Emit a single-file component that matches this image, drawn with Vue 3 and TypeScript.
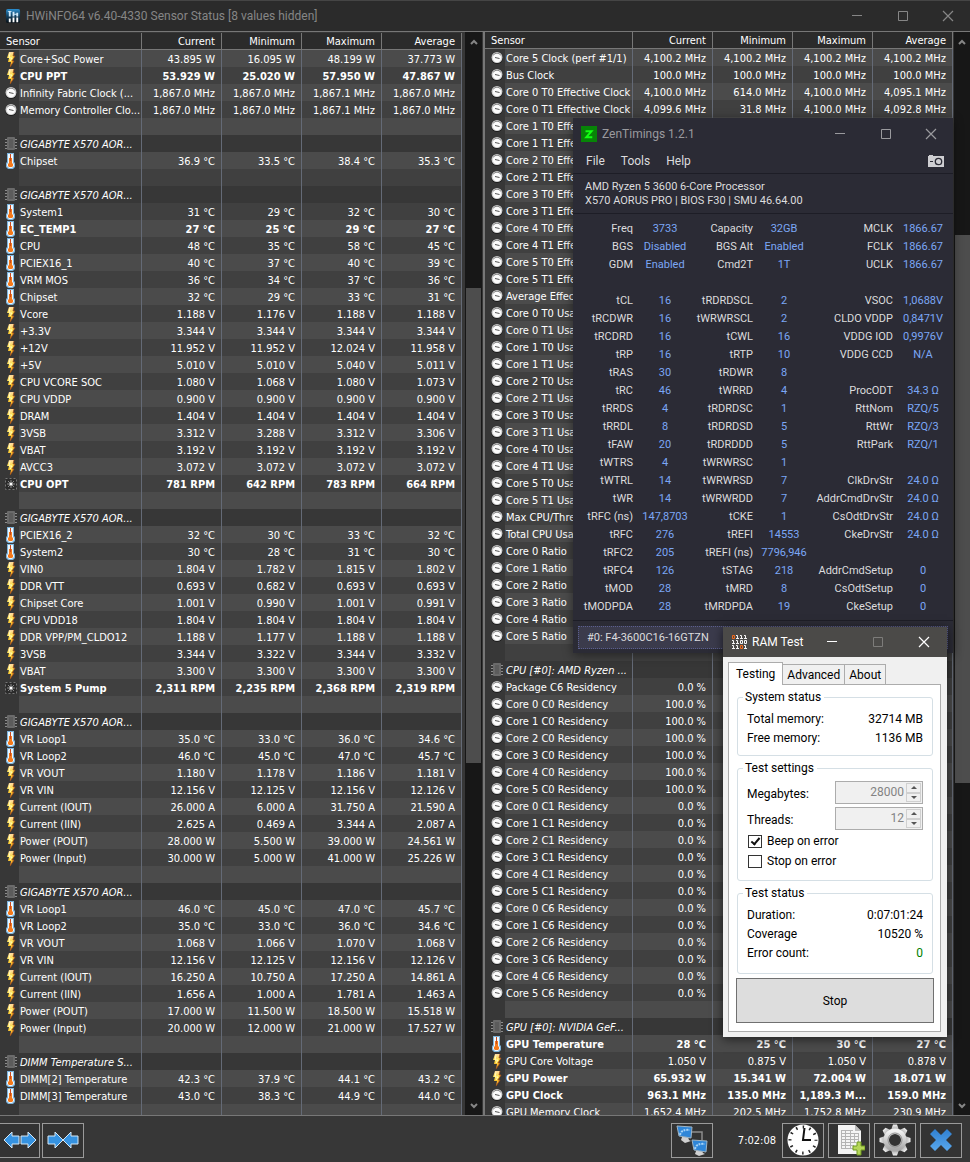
<script setup lang="ts">
type Icon = 'bolt' | 'gauge' | 'temp' | 'fan' | 'chip' | ''
interface Row {
  icon: Icon
  name: string
  values: string[]
  bold?: boolean
}

function row(icon: Icon, name: string, values = '', bold = false): Row {
  return { icon, name, values: values ? values.split('|') : ['', '', '', ''], bold }
}
const blank = () => row('', '')
const group = (name: string) => row('chip', name)
const bolt = (name: string, unit: string, v: string) =>
  row('bolt', name, v.split(' ').map((x) => `${x} ${unit}`).join('|'))
const temp = (name: string, v: string, bold = false) =>
  row('temp', name, v.split(' ').map((x) => `${x} °C`).join('|'), bold)
const rpm = (name: string, v: string) =>
  row('fan', name, v.split(' ').map((x) => `${x} RPM`).join('|'), true)
const mhz = (name: string, v: string, bold = false) =>
  row('gauge', name, v.split(' ').map((x) => `${x} MHz`).join('|'), bold)

const board = 'GIGABYTE X570 AOR...'

const leftRows: Row[] = [
  bolt('Core+SoC Power', 'W', '43.895 16.095 48.199 37.773'),
  { ...bolt('CPU PPT', 'W', '53.929 25.020 57.950 47.867'), bold: true },
  mhz('Infinity Fabric Clock (...', '1,867.0 1,867.0 1,867.1 1,867.0'),
  mhz('Memory Controller Clo...', '1,867.0 1,867.0 1,867.1 1,867.0'),
  blank(),
  group(board),
  temp('Chipset', '36.9 33.5 38.4 35.3'),
  blank(),
  group(board),
  temp('System1', '31 29 32 30'),
  temp('EC_TEMP1', '27 25 29 27', true),
  temp('CPU', '48 35 58 45'),
  temp('PCIEX16_1', '40 37 40 39'),
  temp('VRM MOS', '36 34 37 36'),
  temp('Chipset', '32 29 33 31'),
  bolt('Vcore', 'V', '1.188 1.176 1.188 1.188'),
  bolt('+3.3V', 'V', '3.344 3.344 3.344 3.344'),
  bolt('+12V', 'V', '11.952 11.952 12.024 11.958'),
  bolt('+5V', 'V', '5.010 5.010 5.040 5.011'),
  bolt('CPU VCORE SOC', 'V', '1.080 1.068 1.080 1.073'),
  bolt('CPU VDDP', 'V', '0.900 0.900 0.900 0.900'),
  bolt('DRAM', 'V', '1.404 1.404 1.404 1.404'),
  bolt('3VSB', 'V', '3.312 3.288 3.312 3.306'),
  bolt('VBAT', 'V', '3.192 3.192 3.192 3.192'),
  bolt('AVCC3', 'V', '3.072 3.072 3.072 3.072'),
  rpm('CPU OPT', '781 642 783 664'),
  blank(),
  group(board),
  temp('PCIEX16_2', '32 30 33 32'),
  temp('System2', '30 28 31 30'),
  bolt('VIN0', 'V', '1.804 1.782 1.815 1.802'),
  bolt('DDR VTT', 'V', '0.693 0.682 0.693 0.693'),
  bolt('Chipset Core', 'V', '1.001 0.990 1.001 0.991'),
  bolt('CPU VDD18', 'V', '1.804 1.804 1.804 1.804'),
  bolt('DDR VPP/PM_CLDO12', 'V', '1.188 1.177 1.188 1.188'),
  bolt('3VSB', 'V', '3.344 3.322 3.344 3.332'),
  bolt('VBAT', 'V', '3.300 3.300 3.300 3.300'),
  rpm('System 5 Pump', '2,311 2,235 2,368 2,319'),
  blank(),
  group(board),
  temp('VR Loop1', '35.0 33.0 36.0 34.6'),
  temp('VR Loop2', '46.0 45.0 47.0 45.7'),
  bolt('VR VOUT', 'V', '1.180 1.178 1.186 1.181'),
  bolt('VR VIN', 'V', '12.156 12.125 12.156 12.126'),
  bolt('Current (IOUT)', 'A', '26.000 6.000 31.750 21.590'),
  bolt('Current (IIN)', 'A', '2.625 0.469 3.344 2.087'),
  bolt('Power (POUT)', 'W', '28.000 5.500 39.000 24.561'),
  bolt('Power (Input)', 'W', '30.000 5.000 41.000 25.226'),
  blank(),
  group(board),
  temp('VR Loop1', '46.0 45.0 47.0 45.7'),
  temp('VR Loop2', '35.0 33.0 36.0 34.6'),
  bolt('VR VOUT', 'V', '1.068 1.066 1.070 1.068'),
  bolt('VR VIN', 'V', '12.156 12.125 12.156 12.126'),
  bolt('Current (IOUT)', 'A', '16.250 10.750 17.250 14.861'),
  bolt('Current (IIN)', 'A', '1.656 1.000 1.781 1.463'),
  bolt('Power (POUT)', 'W', '17.000 11.500 18.500 15.518'),
  bolt('Power (Input)', 'W', '20.000 12.000 21.000 17.527'),
  blank(),
  group('DIMM Temperature S...'),
  temp('DIMM[2] Temperature', '42.3 37.9 44.1 43.2'),
  temp('DIMM[3] Temperature', '43.0 38.3 44.9 44.0'),
  blank(),
]

const cores = [0, 1, 2, 3, 4, 5]
const perThread = (from: number, label: string) =>
  cores.slice(from).flatMap((c) => [0, 1].map((t) => row('gauge', `Core ${c} T${t} ${label}`)))
const residency = (state: string, value: string) =>
  cores.map((c) => row('gauge', `Core ${c} ${state} Residency`, `${value}|||`))

const rightRows: Row[] = [
  mhz('Core 5 Clock (perf #1/1)', '4,100.2 4,100.2 4,100.2 4,100.2'),
  mhz('Bus Clock', '100.0 100.0 100.0 100.0'),
  mhz('Core 0 T0 Effective Clock', '4,100.0 614.0 4,100.0 4,095.1'),
  mhz('Core 0 T1 Effective Clock', '4,099.6 31.8 4,100.0 4,092.8'),
  ...perThread(1, 'Effective Clock'),
  row('gauge', 'Average Effective Clock'),
  ...perThread(0, 'Usage'),
  row('gauge', 'Max CPU/Thread Usage'),
  row('gauge', 'Total CPU Usage'),
  ...cores.map((c) => row('gauge', `Core ${c} Ratio`)),
  blank(),
  group('CPU [#0]: AMD Ryzen ...'),
  row('gauge', 'Package C6 Residency', '0.0 %|||'),
  ...residency('C0', '100.0 %'),
  ...residency('C1', '0.0 %'),
  ...residency('C6', '0.0 %'),
  blank(),
  group('GPU [#0]: NVIDIA GeF...'),
  temp('GPU Temperature', '28 25 30 27', true),
  bolt('GPU Core Voltage', 'V', '1.050 0.875 1.050 0.878'),
  { ...bolt('GPU Power', 'W', '65.932 15.341 72.004 18.071'), bold: true },
  row('gauge', 'GPU Clock', '963.1 MHz|135.0 MHz|1,189.3 M...|159.0 MHz', true),
  mhz('GPU Memory Clock', '1,652.4 202.5 1,752.8 230.9'),
]

const panes = [
  { id: 'left', rows: leftRows, before: 238, thumb: 474, after: 339 },
  { id: 'right', rows: rightRows, before: 185, thumb: 547, after: 319 },
]
const columns = ['Current', 'Minimum', 'Maximum', 'Average']

const timings: string[][] = [
  ['Freq', '3733', 'Capacity', '32GB', 'MCLK', '1866.67'],
  ['BGS', 'Disabled', 'BGS Alt', 'Enabled', 'FCLK', '1866.67'],
  ['GDM', 'Enabled', 'Cmd2T', '1T', 'UCLK', '1866.67'],
  ['', '', '', '', '', ''],
  ['tCL', '16', 'tRDRDSCL', '2', 'VSOC', '1,0688V'],
  ['tRCDWR', '16', 'tWRWRSCL', '2', 'CLDO VDDP', '0,8471V'],
  ['tRCDRD', '16', 'tCWL', '16', 'VDDG IOD', '0,9976V'],
  ['tRP', '16', 'tRTP', '10', 'VDDG CCD', 'N/A'],
  ['tRAS', '30', 'tRDWR', '8', '', ''],
  ['tRC', '46', 'tWRRD', '4', 'ProcODT', '34.3 Ω'],
  ['tRRDS', '4', 'tRDRDSC', '1', 'RttNom', 'RZQ/5'],
  ['tRRDL', '8', 'tRDRDSD', '5', 'RttWr', 'RZQ/3'],
  ['tFAW', '20', 'tRDRDDD', '5', 'RttPark', 'RZQ/1'],
  ['tWTRS', '4', 'tWRWRSC', '1', '', ''],
  ['tWTRL', '14', 'tWRWRSD', '7', 'ClkDrvStr', '24.0 Ω'],
  ['tWR', '14', 'tWRWRDD', '7', 'AddrCmdDrvStr', '24.0 Ω'],
  ['tRFC (ns)', '147,8703', 'tCKE', '1', 'CsOdtDrvStr', '24.0 Ω'],
  ['tRFC', '276', 'tREFI', '14553', 'CkeDrvStr', '24.0 Ω'],
  ['tRFC2', '205', 'tREFI (ns)', '7796,946', '', ''],
  ['tRFC4', '126', 'tSTAG', '218', 'AddrCmdSetup', '0'],
  ['tMOD', '28', 'tMRD', '8', 'CsOdtSetup', '0'],
  ['tMODPDA', '28', 'tMRDPDA', '19', 'CkeSetup', '0'],
]
</script>

<template>
  <div class="app">
    <svg class="defs" aria-hidden="true">
      <defs>
        <linearGradient id="g-bolt" x1="0" y1="0" x2="0" y2="1">
          <stop offset="0" stop-color="#ffd9a0" />
          <stop offset=".45" stop-color="#ffe23c" />
          <stop offset="1" stop-color="#f58a1c" />
        </linearGradient>
        <linearGradient id="g-blue" x1="0" y1="0" x2="0" y2="1">
          <stop offset="0" stop-color="#2f7fd0" />
          <stop offset="1" stop-color="#5aa8ec" />
        </linearGradient>
        <linearGradient id="g-gear" x1="0" y1="0" x2="0" y2="1">
          <stop offset="0" stop-color="#f2f2f2" />
          <stop offset="1" stop-color="#a9a9a9" />
        </linearGradient>
        <linearGradient id="g-title" x1="0" y1="0" x2="0" y2="1">
          <stop offset="0" stop-color="#2b8fd0" />
          <stop offset=".5" stop-color="#12405f" />
          <stop offset="1" stop-color="#0a0f14" />
        </linearGradient>
      </defs>
      <symbol id="i-bolt" viewBox="0 0 14 16">
        <path d="M5 1h5L9 5h2L8 10h2l-4 6 1-5H4l1-4H3z" fill="url(#g-bolt)" />
        <path d="M10 1L9 5h2L8 10h2l-4 6" fill="none" stroke="#a8501a" stroke-width=".8" />
        <path d="M6 2L5 7h3l-2 3" fill="none" stroke="#fffbc0" />
      </symbol>
      <symbol id="i-gauge" viewBox="0 0 14 16">
        <circle cx="7" cy="8" r="6" fill="#1c1c1c" />
        <circle cx="7" cy="7.500" r="5.500" fill="#d2d2d2" />
        <circle cx="7" cy="8" r="4.200" fill="#fbfbfb" />
        <path d="M3 5.500a4.600 4.600 0 0 1 8 0" fill="none" stroke="#8a8a8a" />
        <path d="M5 7.500l4.500 1" stroke="#555" />
      </symbol>
      <symbol id="i-temp" viewBox="0 0 14 16">
        <path d="M3 0h7v9l1 1v4l-2 2H4l-2-2v-4l1-1z" fill="#7db4dc" />
        <path d="M4 1h5v9l1 1v2l-2 2H5l-2-2v-2l1-1z" fill="#edf6fd" />
        <path d="M5 5h3v5l1 1v2l-1 1H5l-1-1v-2l1-1z" fill="#f47a1c" />
        <path d="M6.500 1v7" stroke="#c8481a" />
      </symbol>
      <symbol id="i-chip" viewBox="0 0 14 16">
        <path d="M1 3.500h12M1 6.500h12M1 9.500h12M1 12.500h12" stroke="#8c8c8c" />
        <rect x="3" y="1" width="8" height="13" rx="1" fill="#6a6a6a" />
        <path d="M5 3h4v9H5z" fill="#5c5c5c" />
      </symbol>
      <symbol id="i-fan" viewBox="0 0 14 16">
        <rect x="1.500" y="2.500" width="11" height="11" fill="#2b2b2b" stroke="#777" stroke-dasharray="2 2" />
        <path d="M7 4v8M3 8h8M4 5l6 6M10 5l-6 6" stroke="#898989" />
        <circle cx="7" cy="8" r="1.500" fill="#fff" />
      </symbol>
      <symbol id="i-min" viewBox="0 0 12 12"><path d="M1 5.500h10" stroke="currentColor" /></symbol>
      <symbol id="i-max" viewBox="0 0 12 12">
        <path d="M1.500 1.500h9v9h-9z" fill="none" stroke="currentColor" />
      </symbol>
      <symbol id="i-close" viewBox="0 0 12 12">
        <path d="M1 1l10 10M11 1L1 11" stroke="currentColor" stroke-width="1.200" />
      </symbol>
    </svg>

    <header class="titlebar">
      <svg class="app-icon" viewBox="0 0 16 16">
        <rect x="0" y="0" width="15" height="15" rx="2" fill="url(#g-title)" />
        <path d="M2 2h4v1H2zM3 3h2v5H3zM7 3h2v5H7zM11 4h2v4h-2zM9 5h2v1H9z" fill="#cfe9fa" />
        <path d="M3 10h2v4H3zM7 9h2v5H7zM11 9h2v5h-2z" fill="#fff" />
      </svg>
      <h1>HWiNFO64 v6.40-4330 Sensor Status [8 values hidden]</h1>
      <button class="win" aria-label="Minimize"><svg><use href="#i-min" /></svg></button>
      <button class="win" aria-label="Maximize"><svg><use href="#i-max" /></svg></button>
      <button class="win" aria-label="Close"><svg><use href="#i-close" /></svg></button>
    </header>

    <main class="panes">
      <section v-for="p in panes" :key="p.id" class="pane" :class="p.id">
        <div class="table-wrap">
          <table class="sensors">
            <colgroup>
              <col class="c-icon" />
              <col />
              <col v-for="c in columns" :key="c" class="c-value" />
            </colgroup>
            <thead>
              <tr>
                <th colspan="2" class="name">Sensor</th>
                <th v-for="c in columns" :key="c">{{ c }}</th>
              </tr>
            </thead>
            <tbody>
              <tr
                v-for="(r, i) in p.rows"
                :key="i"
                :class="{ odd: i % 2 === 1, bold: r.bold, group: r.icon === 'chip' }"
              >
                <td class="icon">
                  <svg v-if="r.icon"><use :href="`#i-${r.icon}`" /></svg>
                </td>
                <td class="name">{{ r.name }}</td>
                <td v-for="(v, k) in r.values" :key="k">{{ v }}</td>
              </tr>
            </tbody>
          </table>
        </div>
        <div class="scroll" aria-hidden="true">
          <svg viewBox="0 0 8 6"><path d="M1 5l3-3 3 3" /></svg>
          <div :style="{ flexGrow: p.before }"></div>
          <div class="thumb" :style="{ flexGrow: p.thumb }"></div>
          <div :style="{ flexGrow: p.after }"></div>
          <svg viewBox="0 0 8 6"><path d="M1 1l3 3 3-3" /></svg>
        </div>
      </section>
    </main>

    <footer class="toolbar">
      <button class="tool first" aria-label="Expand columns">
        <svg class="arrows" viewBox="0 0 34 20">
          <path d="M1 10l8-8v4h7v8H9v4zM33 10l-8-8v4h-7v8h7v4z" />
        </svg>
      </button>
      <button class="tool" aria-label="Shrink columns">
        <svg class="arrows" viewBox="0 0 34 20">
          <path d="M17 10L9 2v4H2v8h7v4zM17 10l8-8v4h7v8h-7v4z" />
        </svg>
      </button>
      <span class="grow"></span>
      <button class="tool network" aria-label="Remote sensors">
        <svg viewBox="0 0 32 32">
          <path d="M16 8h10v8" fill="none" stroke="#8c8c8c" stroke-width="1.500" />
          <path d="M6 13h6l1 3 2 1-6 2-4-3z" fill="#d0d0d0" />
          <path d="M1 2l15 1-1 11-12-2z" fill="#2f86d8" stroke="#9fb4c4" />
          <path d="M4 11q1-6 10-5" fill="none" stroke="#a5d3f7" stroke-width="2" stroke-dasharray="2 1" />
          <path d="M20 27h6l1 2 2 1-6 2-4-2z" fill="#d0d0d0" />
          <path d="M16 16l15 1-1 11-12-2z" fill="#2f86d8" stroke="#9fb4c4" />
          <path d="M19 25q1-6 10-5" fill="none" stroke="#a5d3f7" stroke-width="2" stroke-dasharray="2 1" />
        </svg>
      </button>
      <time class="elapsed">7:02:08</time>
      <button class="tool" aria-label="Reset clock">
        <svg viewBox="0 0 32 32">
          <circle cx="16" cy="16" r="15.500" fill="#fff" />
          <circle cx="16" cy="16" r="13" fill="none" stroke="#222" stroke-width="3" stroke-dasharray="1.500 5.307" stroke-dashoffset=".75" />
          <path d="M17.500 4L16 16h8" fill="none" stroke="#111" stroke-width="2" />
        </svg>
      </button>
      <button class="tool" aria-label="Start logging">
        <svg viewBox="0 0 32 32">
          <path d="M5 1h17l6 6v23H5z" fill="#f4f4f4" />
          <path d="M22 1v6h6z" fill="#bdbdbd" />
          <path d="M8 6.500h12M8 9.500h17M8 12.500h17M8 15.500h17M8 18.500h15M8 21.500h13M8 24.500h13M8.500 6v19M12.500 6v19M17.500 6v19M21.500 9v10M25.500 9v9" fill="none" stroke="#b4b4b4" />
          <path d="M24 18h4v4h4v4h-4v5h-4v-5h-4v-4h4z" fill="#b5d65a" stroke="#6f9a1e" />
        </svg>
      </button>
      <button class="tool" aria-label="Settings">
        <svg viewBox="0 0 32 32">
          <g fill="url(#g-gear)">
            <path v-for="a in 8" :key="a" d="M12 6l2-5.500h4L20 6z" :transform="`rotate(${a * 45} 16 16)`" />
          </g>
          <circle cx="16" cy="16" r="8.800" fill="none" stroke="url(#g-gear)" stroke-width="5.500" />
          <circle cx="16" cy="16" r="7" fill="none" stroke="#8f8f8f" />
        </svg>
      </button>
      <button class="tool" aria-label="Close sensors">
        <svg viewBox="0 0 32 32">
          <path d="M5 10l5-5 6 6 6-6 5 5-6 6 6 6-5 5-6-6-6 6-5-5 6-6z" fill="url(#g-blue)" />
        </svg>
      </button>
    </footer>

    <section class="zen" aria-label="ZenTimings">
      <div class="zen-title">
        <svg class="zen-icon" viewBox="0 0 16 16">
          <rect width="16" height="16" fill="#078407" />
          <path d="M4.500 5.200h6l-5.200 6h6" fill="none" stroke="#13ff13" stroke-width="2" />
        </svg>
        <h2>ZenTimings 1.2.1</h2>
        <button class="win" aria-label="Minimize"><svg><use href="#i-min" /></svg></button>
        <button class="win" aria-label="Maximize"><svg><use href="#i-max" /></svg></button>
        <button class="win" aria-label="Close"><svg><use href="#i-close" /></svg></button>
      </div>
      <nav class="zen-menu">
        <button>File</button>
        <button>Tools</button>
        <button>Help</button>
        <button class="camera" aria-label="Screenshot">
          <svg viewBox="0 0 16 12">
            <path d="M0 1h1V0h4v1h11v11H0z" fill="#cfcfd2" />
            <circle cx="10.500" cy="6.500" r="3.200" fill="none" stroke="#2b2b35" stroke-width="1.300" />
            <path d="M2 6.500h3" stroke="#2b2b35" />
          </svg>
        </button>
      </nav>
      <div class="zen-info">
        <p>AMD Ryzen 5 3600 6-Core Processor</p>
        <p>X570 AORUS PRO | BIOS F30 | SMU 46.64.00</p>
      </div>
      <table class="timings">
        <colgroup>
          <col class="t1" /><col class="t2" /><col class="t3" />
          <col class="t4" /><col /><col class="t6" />
        </colgroup>
        <tbody>
          <tr v-for="(t, i) in timings" :key="i">
            <template v-for="k in [0, 2, 4]" :key="k">
              <th scope="row"><span>{{ t[k] }}</span></th>
              <td>{{ t[k + 1] }}</td>
            </template>
          </tr>
        </tbody>
      </table>
      <div class="zen-foot">
        <select aria-label="Memory module">
          <option>#0: F4-3600C16-16GTZN</option>
        </select>
      </div>
    </section>

    <section class="ram" aria-label="RAM Test">
      <div class="ram-title">
        <svg class="ram-icon" viewBox="0 0 16 15" fill="none" stroke="#f4f4f4">
          <path d="M.5 .5h2v3h-2z" stroke="#f26a1b" />
          <path d="M4 .5h1.500v3M4 3.500h3M8 .5h1.500v3M8 3.500h3M12 .5h1.500v3M12 3.500h3" />
          <path d="M0 5.500h1.500v3M0 8.500h3M4 5.500h1.500v3M4 8.500h3M8.500 5.500h2v3h-2zM12.500 5.500h2v3h-2z" />
          <path d="M0 10.500h1.500v3M0 13.500h3M4 10.500h1.500v3M4 13.500h3M12 10.500h1.500v3M12 13.500h3" />
          <path d="M8.500 10.500h2v3h-2z" stroke="#f26a1b" />
        </svg>
        <h2>RAM Test</h2>
        <button class="win" aria-label="Minimize"><svg><use href="#i-min" /></svg></button>
        <button class="win dim" aria-label="Maximize" disabled><svg><use href="#i-max" /></svg></button>
        <button class="win" aria-label="Close"><svg><use href="#i-close" /></svg></button>
      </div>
      <div class="ram-body">
        <div class="tabs" role="tablist">
          <button role="tab" aria-selected="true" class="active">Testing</button>
          <button role="tab" aria-selected="false">Advanced</button>
          <button role="tab" aria-selected="false">About</button>
        </div>
        <form class="page" @submit.prevent>
          <fieldset class="status">
            <legend>System status</legend>
            <div class="line"><span>Total memory:</span><span>32714 MB</span></div>
            <div class="line"><span>Free memory:</span><span>1136 MB</span></div>
          </fieldset>
          <fieldset class="settings">
            <legend>Test settings</legend>
            <div class="field">
              <label for="mb">Megabytes:</label>
              <div class="spin">
                <input id="mb" type="number" value="28000" disabled />
                <div class="steps">
                  <button type="button" disabled aria-label="More megabytes"><i class="up"></i></button>
                  <button type="button" disabled aria-label="Fewer megabytes"><i class="down"></i></button>
                </div>
              </div>
            </div>
            <div class="field">
              <label for="th">Threads:</label>
              <div class="spin">
                <input id="th" type="number" value="12" disabled />
                <div class="steps">
                  <button type="button" disabled aria-label="More threads"><i class="up"></i></button>
                  <button type="button" disabled aria-label="Fewer threads"><i class="down"></i></button>
                </div>
              </div>
            </div>
            <label class="check"><input type="checkbox" checked />Beep on error</label>
            <label class="check"><input type="checkbox" />Stop on error</label>
          </fieldset>
          <fieldset class="status last">
            <legend>Test status</legend>
            <div class="line"><span>Duration:</span><span>0:07:01:24</span></div>
            <div class="line"><span>Coverage</span><span>10520 %</span></div>
            <div class="line"><span>Error count:</span><span class="ok">0</span></div>
          </fieldset>
          <button type="button" class="stop">Stop</button>
        </form>
      </div>
    </section>
  </div>
</template>

<style>
body {
  margin: 0;
  background: #373737;
}
</style>

<style scoped>
.app {
  --ui: Roboto, 'Open Sans', sans-serif;
  --grid: 'DejaVu Sans Condensed', 'DejaVu Sans', sans-serif;
  position: relative;
  display: flex;
  flex-direction: column;
  height: 100vh;
  overflow: hidden;
  background: #373737;
  color: #fff;
  font-family: var(--ui);
  font-size: 12px;
}
.app *,
.app *::before {
  box-sizing: border-box;
}
.defs {
  position: absolute;
  width: 0;
  height: 0;
}
h1,
h2,
p {
  margin: 0;
  font-size: inherit;
  font-weight: 400;
}
button {
  padding: 0;
  border: 0;
  background: none;
  color: inherit;
  font: inherit;
}

.titlebar {
  display: flex;
  align-items: center;
  height: 31px;
  padding-left: 6px;
  border-top: 1px solid #454545;
  background: #2b2b2b;
  color: #868686;
}
.app-icon {
  width: 15px;
  height: 15px;
  margin-right: 5px;
}
h1,
h2 {
  flex: 1;
  white-space: nowrap;
}
.win {
  display: flex;
  align-items: center;
  justify-content: center;
  width: 46px;
  height: 30px;
}
.win svg {
  width: 12px;
  height: 12px;
}
.titlebar .win:last-child {
  width: 44px;
}

.panes {
  display: grid;
  grid-template-columns: 1fr 1fr;
  flex: 1;
  min-height: 0;
  border-top: 1px solid #777;
  border-bottom: 1px solid #777;
}
.pane {
  display: flex;
  min-width: 0;
  min-height: 0;
  background: #373737;
}
.pane.left {
  border-right: 2px solid #777;
}
.table-wrap {
  flex: 1;
  min-width: 0;
  overflow: hidden;
}
.left .table-wrap {
  padding-top: 1px;
}
.sensors {
  width: 100%;
  border-spacing: 0;
  table-layout: fixed;
  font-family: var(--grid);
  font-size: 11px;
  line-height: 15px;
}
.left .c-icon {
  width: 19px;
}
.right .c-icon {
  width: 20px;
}
.c-value {
  width: 80px;
}
.sensors th,
.sensors td {
  height: 17px;
  padding: 2px 6px 0 0;
  overflow: hidden;
  border-right: 1px solid #646a76;
  text-align: right;
  white-space: nowrap;
  font-weight: 400;
}
.sensors th {
  padding-top: 1px;
  border-right-color: #777;
  border-bottom: 1px solid #777;
  background: #2b2b2b;
}
.sensors .name {
  padding-right: 0;
  padding-left: 1px;
  text-align: left;
}
.sensors th.name {
  padding-left: 6px;
}
.sensors td {
  background: #4b4b4b;
}
.sensors .odd td {
  background: #404040;
}
.sensors .group td {
  background: #373737;
}
.sensors .group .name {
  font-style: italic;
}
.sensors .bold td {
  font-weight: 700;
}
.sensors td.icon {
  padding: 0 0 0 4px;
  border: 0;
  background: #373737;
  line-height: 0;
  text-align: left;
}
.right td.icon {
  padding-left: 5px;
}
.icon svg {
  display: block;
  width: 14px;
  height: 16px;
}
.scroll {
  display: flex;
  flex-direction: column;
  align-items: center;
  width: 17px;
  margin: 0 1px 0 3px;
  padding: 7px 0 2px;
  background: #171717;
}
.right .scroll {
  width: 16px;
  margin: 0 0 0 1px;
}
.scroll svg {
  width: 8px;
  height: 6px;
  margin: 0 0 4px;
  fill: none;
  stroke: #868686;
  stroke-width: 2;
}
.thumb {
  width: 15px;
  background: #4d4d4d;
}

.toolbar {
  display: flex;
  align-items: center;
  gap: 4px;
  height: 46px;
  padding: 2px 8px 0 0;
  background: #373737;
}
.tool {
  display: flex;
  align-items: center;
  justify-content: center;
  width: 42px;
  height: 35px;
  border: 1px solid #9a9a9a;
  background: #333;
}
.tool svg {
  width: 32px;
  height: 32px;
}
.tool.first {
  width: 40px;
  margin-right: -2px;
  border-left: 0;
}
.tool svg.arrows {
  width: 34px;
  height: 20px;
  fill: #3592e0;
  stroke: #d5e8f6;
}
.grow {
  flex: 1;
}
.elapsed {
  width: 61px;
  padding-right: 2px;
  font-family: var(--grid);
  font-size: 11px;
  text-align: right;
}

.zen {
  position: absolute;
  top: 118px;
  right: 17px;
  width: 380px;
  padding-bottom: 4px;
  background: #2b2b35;
  box-shadow: 0 2px 10px rgba(0, 0, 0, 0.45);
  color: #dcdcde;
  font-size: 11px;
}
.zen-title {
  display: flex;
  align-items: center;
  height: 31px;
  padding-left: 8px;
  color: #9a9a9e;
  font-size: 12px;
}
.zen-title .win:last-child {
  width: 44px;
}
.zen-icon {
  width: 16px;
  height: 16px;
  margin-right: 5px;
}
.zen-menu {
  display: flex;
  align-items: center;
  gap: 16px;
  height: 24px;
  padding: 0 9px 0 13px;
  font-size: 12px;
}
.camera {
  margin-left: auto;
}
.camera svg {
  display: block;
  width: 16px;
  height: 12px;
}
.zen-info {
  padding: 6px 12px 5px;
  border: solid #1d1d26;
  border-width: 1px 0;
  line-height: 14px;
}
.zen-info p {
  white-space: nowrap;
}
.timings {
  width: 100%;
  margin: 6px 0 4px;
  border-spacing: 0;
  table-layout: fixed;
  line-height: 18px;
}
.t1 { width: 60px; }
.t2 { width: 64px; }
.t3 { width: 56px; }
.t4 { width: 62px; }
.t6 { width: 60px; }
.timings th,
.timings td {
  height: 18px;
  padding: 0;
  white-space: nowrap;
  font-weight: 400;
}
.timings th span {
  display: flex;
  justify-content: flex-end;
}
.timings td {
  color: #7ba7f5;
  text-align: center;
}
.zen-foot {
  padding: 5px 5px 0;
  border-top: 1px solid #1d1d26;
}
.zen-foot select {
  display: block;
  width: 100%;
  height: 23px;
  padding: 0 8px;
  border: 1px dotted #5b5f90;
  border-radius: 0;
  background: #3b3b4c;
  color: inherit;
  font: inherit;
  appearance: none;
}

.ram {
  position: absolute;
  top: 627px;
  right: 23px;
  width: 224px;
  background: #f0f0f0;
  box-shadow: 0 2px 10px rgba(0, 0, 0, 0.6);
  color: #000;
}
.ram-title {
  display: flex;
  align-items: center;
  height: 30px;
  padding-left: 9px;
  background: #4b4a48;
  color: #fff;
}
.ram-icon {
  width: 16px;
  height: 15px;
  margin-right: 4px;
}
.ram .dim {
  color: #7d7c7a;
}
.ram-body {
  padding: 5px 6px 5px 5px;
}
.tabs {
  display: flex;
  align-items: flex-end;
  height: 22px;
}
.tabs button {
  height: 20px;
  padding: 0 4px;
  border: 1px solid #acacac;
  border-bottom: 0;
  border-left: 0;
}
.tabs .active {
  z-index: 1;
  height: 23px;
  margin-bottom: -1px;
  padding: 0 7px;
  border-left: 1px solid #acacac;
  background: #fff;
}
.page {
  padding: 4px 6px 8px 7px;
  border: 1px solid #acacac;
  background: #fff;
}
fieldset {
  min-width: 0;
  margin: 0 1px 4px;
  padding: 5px 9px 7px;
  border: 1px solid #d5dfe5;
  border-radius: 3px;
}
legend {
  margin-left: -4px;
  padding: 0 3px 0 2px;
  line-height: 16px;
}
.line {
  display: flex;
  justify-content: space-between;
  line-height: 19px;
}
.ok {
  color: #008000;
}
.field {
  display: flex;
  align-items: center;
  justify-content: space-between;
  margin-bottom: 3px;
}
.field label {
  padding-top: 2px;
}
.spin {
  display: flex;
  width: 88px;
  height: 23px;
  padding: 1px;
  border: 1px solid #acacac;
  background: #f0f0f0;
}
.spin input {
  flex: 1;
  min-width: 0;
  padding: 0 2px 2px 0;
  border: 0;
  background: none;
  color: #838383;
  font: inherit;
  text-align: right;
  appearance: textfield;
}
.spin input::-webkit-inner-spin-button {
  appearance: none;
}
.steps {
  display: flex;
  flex-direction: column;
  width: 15px;
}
.steps button {
  display: flex;
  flex: 1;
  align-items: center;
  justify-content: center;
  border: 1px solid #d0d0d0;
}
.steps i {
  border: 3px solid transparent;
}
.steps .up {
  margin-top: -3px;
  border-bottom-color: #555;
}
.steps .down {
  margin-bottom: -3px;
  border-top-color: #555;
}
.check {
  display: flex;
  align-items: center;
  gap: 5px;
  height: 20px;
}
.field + .check {
  margin-top: -2px;
}
.check input {
  display: grid;
  place-items: center;
  width: 14px;
  height: 13px;
  margin: 0 0 0 1px;
  border: 1px solid #333;
  background: #fff;
  appearance: none;
}
.check input:checked::before {
  width: 5px;
  height: 9px;
  margin-top: -2px;
  border: solid #111;
  border-width: 0 2px 2px 0;
  content: '';
  rotate: 40deg;
}
.settings {
  padding-bottom: 9px;
}
.last {
  padding-bottom: 10px;
}
.stop {
  display: block;
  width: 100%;
  height: 45px;
  border: 1px solid #707070;
  background: #dddddd;
}
</style>
